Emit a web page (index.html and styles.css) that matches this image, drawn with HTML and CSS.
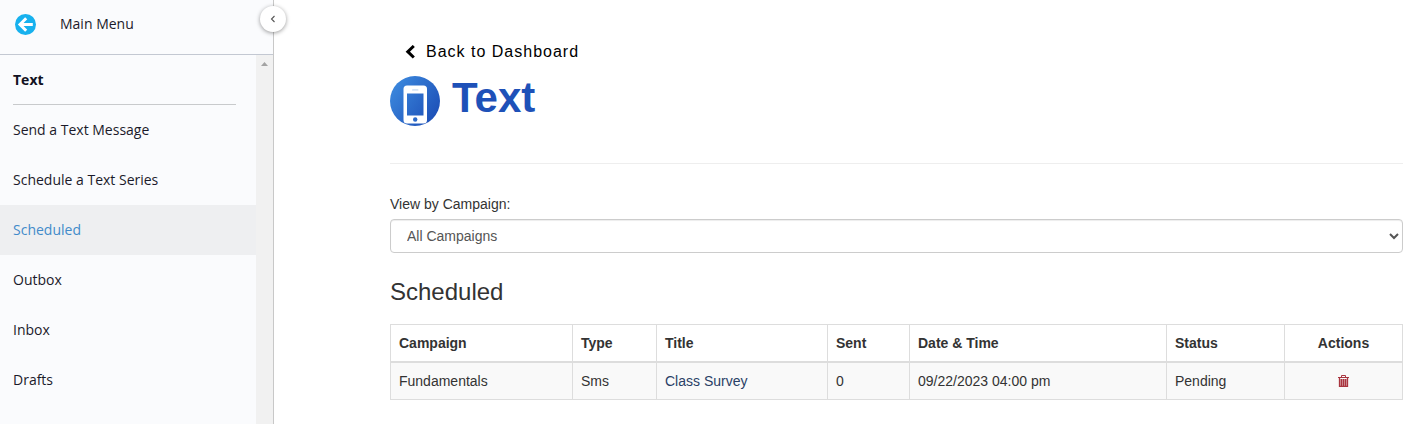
FILE: index.html
```html
<!DOCTYPE html>
<html lang="en">
  <head>
    <meta charset="UTF-8" />
    <meta name="viewport" content="width=device-width, initial-scale=1.0" />
    <title>Text - Scheduled</title>
    <link rel="stylesheet" href="styles.css">
  </head>
  <body>
    <aside class="sidebar">
      <a class="main-menu" href="#">
        <svg width="21" height="21" viewBox="0 0 21 21" aria-hidden="true">
          <circle cx="10.5" cy="10.5" r="10.5" fill="#17b1ee" />
          <path d="M11.2 4.300 5 10.500l6.200 6.200M5.500 10.500h12.300" fill="none" stroke="#fff" stroke-width="3" />
        </svg>
        <span>Main Menu</span>
      </a>
      <button type="button" class="collapse" aria-label="Collapse menu">
        <svg width="6" height="8" viewBox="0 0 6 8"><path d="M4.500 1 1.500 4l3 3" fill="none" stroke="#555" stroke-width="1.100" /></svg>
      </button>
      <div class="menu">
        <nav>
          <h2>Text</h2>
          <a href="#">Send a Text Message</a>
          <a href="#">Schedule a Text Series</a>
          <a href="#" class="active">Scheduled</a>
          <a href="#">Outbox</a>
          <a href="#">Inbox</a>
          <a href="#">Drafts</a>
        </nav>
        <div class="scroll-track">
          <svg width="7" height="4" viewBox="0 0 7 4"><path d="M0 4 3.500 0 7 4z" fill="#a3a3a3" /></svg>
        </div>
      </div>
    </aside>

    <main>
      <a class="back" href="#">
        <svg width="10" height="14" viewBox="0 0 10 14" aria-hidden="true">
          <path d="M8.800 1 2.800 6.700l6 5.800" fill="none" stroke="#000" stroke-width="3" />
        </svg>
        Back to Dashboard
      </a>
      <header class="title">
        <svg width="50" height="50" viewBox="0 0 50 50" aria-hidden="true">
          <defs>
            <linearGradient id="blue" gradientUnits="userSpaceOnUse" x1="4" y1="10" x2="46" y2="40">
              <stop offset="0" stop-color="#3a86dc" />
              <stop offset="1" stop-color="#1e51b8" />
            </linearGradient>
          </defs>
          <circle cx="25" cy="25" r="25" fill="url(#blue)" />
          <rect x="13.500" y="9.500" width="23.500" height="38" rx="3.500" fill="#fff" />
          <rect x="17" y="17.500" width="16.500" height="22" fill="url(#blue)" />
          <rect x="22" y="13" width="6.500" height="1.800" rx="0.900" fill="#d5e3f5" />
          <circle cx="25.200" cy="43.500" r="2.200" fill="#2c6ac9" />
        </svg>
        <h1>Text</h1>
      </header>

      <hr />

      <label for="campaign">View by Campaign:</label>
      <select id="campaign" name="campaign">
        <option>All Campaigns</option>
      </select>

      <h3>Scheduled</h3>
      <table>
        <colgroup>
          <col class="col-campaign" />
          <col class="col-type" />
          <col class="col-title" />
          <col class="col-sent" />
          <col class="col-date" />
          <col class="col-status" />
          <col class="col-actions" />
        </colgroup>
        <thead>
          <tr>
            <th>Campaign</th>
            <th>Type</th>
            <th>Title</th>
            <th>Sent</th>
            <th>Date &amp; Time</th>
            <th>Status</th>
            <th class="actions">Actions</th>
          </tr>
        </thead>
        <tbody>
          <tr>
            <td>Fundamentals</td>
            <td>Sms</td>
            <td><a href="#">Class Survey</a></td>
            <td>0</td>
            <td>09/22/2023 04:00 pm</td>
            <td>Pending</td>
            <td class="actions">
              <button type="button" class="delete" aria-label="Delete">
                <svg width="11" height="14" viewBox="0 0 11 14">
                  <path d="M3.500 2.500v-2h4v2M0 2.500h11" fill="none" stroke="#a9353f" />
                  <path d="M1.500 3v8.400h8V3M1 11.300h9M3.500 4v7M5.500 4v7M7.500 4v7" fill="none" stroke="#a9353f" stroke-width="1.300" />
                  <path d="M2 4h7v7H2z" fill="#a9353f" fill-opacity="0.400" />
                </svg>
              </button>
            </td>
          </tr>
        </tbody>
      </table>
    </main>
  </body>
</html>
```

FILE: styles.css
```css
* {
  box-sizing: border-box;
}

body {
  display: flex;
  min-height: 100vh;
  margin: 0;
  background-color: #fff;
  color: #333;
  font-family: "Liberation Sans", Arial, sans-serif;
  font-size: 14px;
  line-height: 20px;
}

a {
  text-decoration: none;
}

/* sidebar */
.sidebar {
  position: relative;
  display: flex;
  flex-direction: column;
  flex: none;
  width: 274px;
  border-right: 1px solid #c8c8c8;
  background-color: #fafbfd;
  font-family: "Open Sans", sans-serif;
}

.main-menu {
  display: flex;
  align-items: center;
  gap: 24px;
  height: 55px;
  padding: 0 15px 6px;
  border-bottom: 1px solid #c3c8d2;
  color: #1a1a2a;
}

.collapse {
  position: absolute;
  top: 6px;
  right: -13px;
  display: flex;
  align-items: center;
  justify-content: center;
  width: 26px;
  height: 26px;
  padding: 0;
  border: 0;
  border-radius: 50%;
  background-color: #fff;
  box-shadow: 0 1px 4px rgba(0, 0, 0, 0.4);
  cursor: pointer;
}

.menu {
  display: flex;
  flex: 1;
}

nav {
  flex: 1;
}

nav h2 {
  height: 50px;
  margin: 0 20px 0 13px;
  border-bottom: 1px solid #c8cacc;
  color: #111122;
  font-size: 14px;
  font-weight: bold;
  line-height: 50px;
}

nav a {
  display: block;
  padding: 0 13px;
  color: #1a1a2a;
  line-height: 50px;
}

nav a.active {
  background-color: #eeeff1;
  color: #428bca;
}

.scroll-track {
  display: flex;
  justify-content: center;
  width: 17px;
  padding-top: 7px;
  background-color: #f1f1f1;
}

/* content */
main {
  flex: 1;
  padding: 42px 12px 24px 116px;
}

.back {
  display: flex;
  align-items: center;
  gap: 11px;
  padding-left: 15px;
  color: #000;
  font-size: 16px;
  letter-spacing: 1px;
  line-height: 20px;
}

.title {
  display: flex;
  align-items: center;
  gap: 12px;
  margin-top: 14px;
}

h1 {
  margin: 0 0 6px;
  color: #1e51b8;
  font-size: 42px;
  line-height: 42px;
}

hr {
  margin: 37px 0 30px;
  border: 0;
  border-top: 1px solid #eee;
}

label {
  display: block;
  margin-bottom: 5px;
}

select {
  display: block;
  width: 100%;
  height: 34px;
  padding: 6px 12px;
  border: 1px solid #ccc;
  border-radius: 4px;
  background-color: #fff;
  box-shadow: inset 0 1px 1px rgba(0, 0, 0, 0.075);
  color: #555;
  font-family: inherit;
  font-size: 14px;
}

h3 {
  margin: 26px 0 19px;
  font-size: 24px;
  font-weight: normal;
  line-height: 26px;
}

table {
  width: 100%;
  table-layout: fixed;
  border-collapse: collapse;
}

.col-campaign {
  width: 182px;
}

.col-type {
  width: 84px;
}

.col-title {
  width: 171px;
}

.col-sent {
  width: 82px;
}

.col-status,
.col-actions {
  width: 118px;
}

th,
td {
  padding: 8px;
  border: 1px solid #ddd;
  text-align: left;
}

th {
  border-bottom-width: 2px;
}

tbody tr {
  background-color: #f9f9f9;
}

td a {
  color: #2a3f66;
}

.actions {
  text-align: center;
}

.delete {
  padding: 0;
  border: 0;
  background: none;
  vertical-align: middle;
  cursor: pointer;
}

.delete svg {
  display: block;
}
```
